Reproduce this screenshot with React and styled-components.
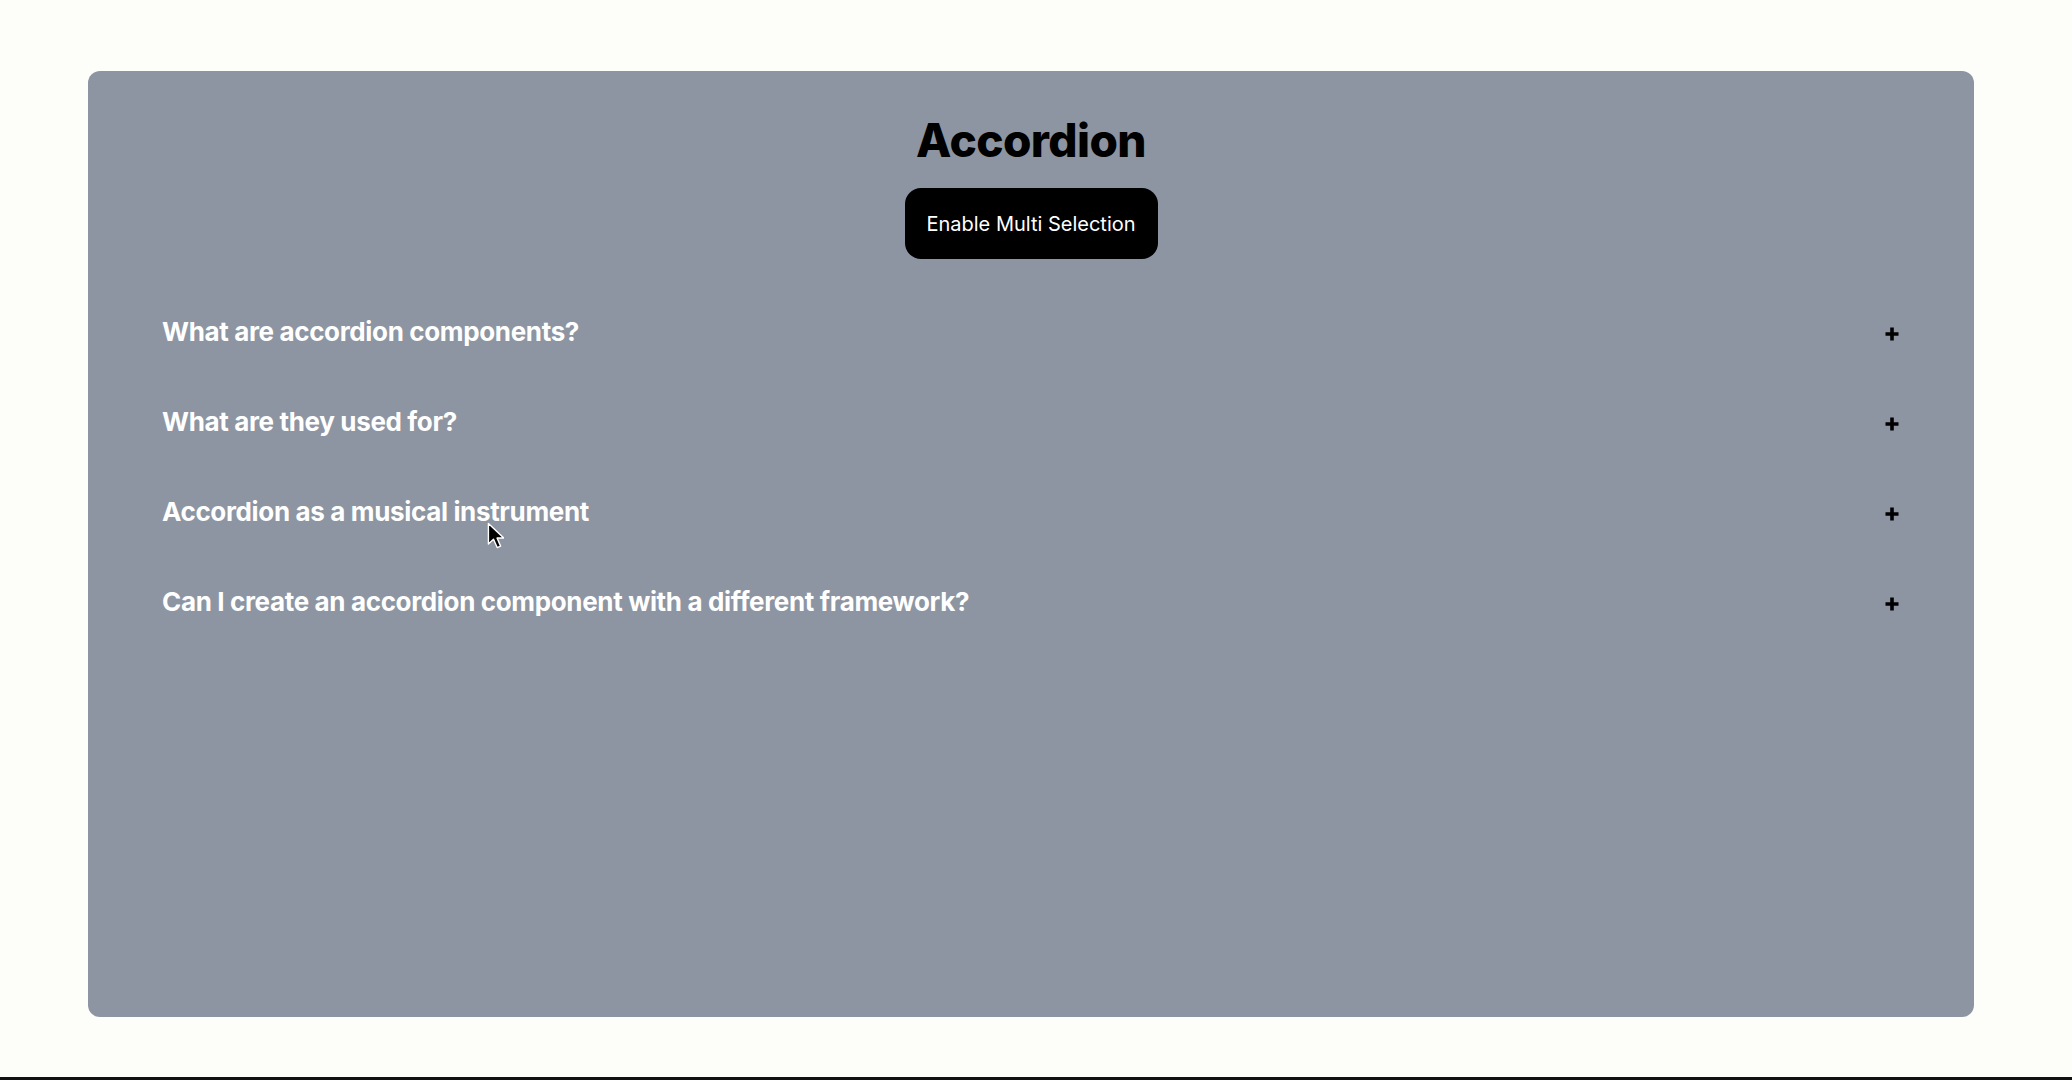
import { useState } from "react";
import styled, { createGlobalStyle } from "styled-components";

const items = [
  {
    id: 1,
    question: "What are accordion components?",
    answer:
      "Accordion components are user interface elements used for organizing and presenting content in a collapsible manner.",
  },
  {
    id: 2,
    question: "What are they used for?",
    answer:
      "They are commonly employed in various contexts, including FAQs, product descriptions, navigation menus and settings panels.",
  },
  {
    id: 3,
    question: "Accordion as a musical instrument",
    answer:
      "The accordion is a musical instrument with a keyboard and bellows. It produces sound by air passing over reeds.",
  },
  {
    id: 4,
    question: "Can I create an accordion component with a different framework?",
    answer:
      "Yes of course, it is very possible to create an accordion component with another framework.",
  },
];

function App() {
  const [multi, setMulti] = useState(false);
  const [selected, setSelected] = useState(null);
  const [selectedList, setSelectedList] = useState([]);

  const toggleItem = (id) => {
    if (multi) {
      setSelectedList((list) =>
        list.includes(id) ? list.filter((x) => x !== id) : [...list, id]
      );
    } else {
      setSelected((cur) => (cur === id ? null : id));
    }
  };

  const isOpen = (id) => (multi ? selectedList.includes(id) : selected === id);

  return (
    <Page>
      <GlobalStyle />
      <Wrapper>
        <Title>Accordion</Title>
        <ToggleButton onClick={() => setMulti(!multi)}>
          Enable Multi Selection
        </ToggleButton>
        <List>
          {items.map((item) => (
            <Item key={item.id}>
              <ItemHeader onClick={() => toggleItem(item.id)}>
                <Question>{item.question}</Question>
                <PlusIcon viewBox="0 0 16 16">
                  <path d="M8 1.5v13M1.5 8h13" />
                </PlusIcon>
              </ItemHeader>
              {isOpen(item.id) && <Answer>{item.answer}</Answer>}
            </Item>
          ))}
        </List>
        <Cursor viewBox="0 0 12 19">
          <path
            d="M1 1 L1 15.5 L4.6 12.2 L7.2 18 L9.6 17 L7.1 11.3 L11.8 11.3 Z"
            fill="#000"
            stroke="#fff"
            strokeWidth="1"
            strokeLinejoin="round"
          />
        </Cursor>
      </Wrapper>
    </Page>
  );
}

export default App;

const GlobalStyle = createGlobalStyle`
  html, body {
    margin: 0;
    padding: 0;
    background: #fdfdf9;
  }
  * {
    box-sizing: border-box;
  }
`;

const Page = styled.div`
  min-height: 1080px;
  padding: 71px 98px 0 88px;
  border-bottom: 3px solid #111;
  font-family: Inter, "Noto Sans", "Liberation Sans", sans-serif;
`;

const Wrapper = styled.div`
  position: relative;
  height: 946px;
  border-radius: 12px;
  background: #8d95a2;
  display: flex;
  flex-direction: column;
  align-items: center;
  padding: 46px 74px 0 74px;
`;

const Title = styled.h1`
  margin: 0;
  font-size: 46px;
  line-height: 1;
  font-weight: 800;
  color: #000;
  letter-spacing: -0.6px;
`;

const ToggleButton = styled.button`
  margin-top: 25px;
  width: 253px;
  height: 71px;
  border: none;
  border-radius: 16px;
  background: #000;
  color: #fff;
  font-family: inherit;
  font-size: 20px;
  font-weight: 400;
  cursor: pointer;
`;

const List = styled.div`
  width: 100%;
  margin-top: 28px;
  display: flex;
  flex-direction: column;
`;

const Item = styled.div`
  display: flex;
  flex-direction: column;
`;

const ItemHeader = styled.div`
  height: 90px;
  display: flex;
  align-items: center;
  justify-content: space-between;
  cursor: pointer;
`;

const Question = styled.h3`
  margin: 0;
  font-size: 26px;
  line-height: 1;
  font-weight: 700;
  color: #fff;
  letter-spacing: -0.35px;
`;

const PlusIcon = styled.svg`
  width: 16px;
  height: 16px;
  margin-top: 4px;
  fill: none;
  stroke: #000;
  stroke-width: 3.6;
`;

const Answer = styled.div`
  color: #fff;
  font-size: 18px;
  padding-bottom: 20px;
`;

const Cursor = styled.svg`
  position: absolute;
  left: 399px;
  top: 451px;
  width: 17px;
  height: 27px;
`;
